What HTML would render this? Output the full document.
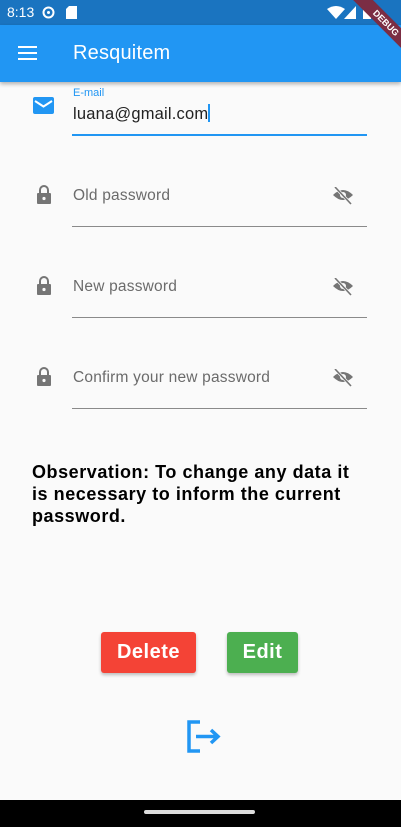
<!DOCTYPE html>
<html><head><meta charset="utf-8"><style>
*{margin:0;padding:0;box-sizing:border-box}
body{width:401px;height:827px;background:#fafafa;font-family:"Liberation Sans",sans-serif;position:relative;overflow:hidden}
.abs{position:absolute}
.sb{top:0;left:0;width:401px;height:25px;background:#1a74c0;color:#fff;font-size:14px}
.ab{top:25px;left:0;width:401px;height:57px;background:#2196f3;box-shadow:0 2px 4px rgba(0,0,0,.3)}
.line{height:1px;background:#8a8a8a;left:72px;width:295px}
.lbl{left:73px;color:#6b6b6b;font-size:15.5px;letter-spacing:.2px}
</style></head><body>
<div class="abs sb"><span class="abs" style="left:7px;top:4px">8:13</span>
<svg class="abs" style="left:41px;top:5px" width="15" height="15" viewBox="0 0 15 15"><circle cx="7.5" cy="7.5" r="5" fill="none" stroke="#fff" stroke-width="2"/><circle cx="7.5" cy="7.5" r="1.5" fill="#fff"/></svg>
<svg class="abs" style="left:66px;top:6px" width="11" height="13"><path d="M3 0H11V13H0V3Z" fill="#fff"/></svg>
<svg class="abs" style="left:327px;top:6px" width="18" height="13"><path d="M0 3Q9-3 18 3L9 13Z" fill="#fff"/></svg>
<svg class="abs" style="left:344px;top:6px" width="12" height="13"><path d="M12 0V13H0Z" fill="#fff"/></svg>
<div class="abs" style="left:363px;top:6px;width:8px;height:13px;background:#fff"></div>
</div>
<div class="abs ab">
<div class="abs" style="left:18px;top:21px;width:19px;height:2px;background:#fff;box-shadow:0 6px 0 #fff,0 12px 0 #fff"></div>
<div class="abs" style="left:73px;top:17px;color:#fff;font-size:20px;letter-spacing:.2px">Resquitem</div>
</div>
<div class="abs" style="left:341px;top:16px;width:90px;height:14px;background:#7b2d44;transform:rotate(45deg);color:#fff;font-size:9px;font-weight:bold;text-align:center;line-height:14px">DEBUG</div>
<svg class="abs" style="left:33px;top:97px" width="21" height="17"><rect width="21" height="17" rx="2" fill="#2196f3"/><path d="M2 4L10.5 9.5L19 4" fill="none" stroke="#fff" stroke-width="2"/></svg>
<div class="abs" style="left:73px;top:87px;color:#2196f3;font-size:11px">E-mail</div>
<div class="abs" style="left:73px;top:104px;color:#222;font-size:16.5px;letter-spacing:.2px">luana@gmail.com<span style="display:inline-block;width:2px;height:18px;background:#2196f3;vertical-align:-3px"></span></div>
<div class="abs" style="left:72px;top:134px;width:295px;height:2px;background:#2196f3"></div>

<div class="abs lbl" style="top:187px">Old password</div>
<div class="abs lbl" style="top:278px">New password</div>
<div class="abs lbl" style="top:369px">Confirm your new password</div>
<div class="abs line" style="top:226px"></div>
<div class="abs line" style="top:317px"></div>
<div class="abs line" style="top:408px"></div>
<svg width="0" height="0"><defs>
<g id="lk"><path d="M4 8V5a4 4 0 018 0V8" fill="none" stroke="#757575" stroke-width="2"/><rect x="1" y="8" width="14" height="11" rx="1" fill="#757575"/><circle cx="8" cy="13.5" r="1.6" fill="#fafafa"/></g>
<g id="ey"><path d="M1 8Q11-2 21 8Q11 18 1 8Z" fill="#757575"/><circle cx="11" cy="8" r="3" fill="#fafafa"/><path d="M3 0L19 17" stroke="#fafafa" stroke-width="3"/><path d="M3 0L19 17" stroke="#757575" stroke-width="1.6"/></g>
</defs></svg>
<svg class="abs" style="left:36px;top:185px" width="16" height="20"><use href="#lk"/></svg>
<svg class="abs" style="left:36px;top:276px" width="16" height="20"><use href="#lk"/></svg>
<svg class="abs" style="left:36px;top:367px" width="16" height="20"><use href="#lk"/></svg>
<svg class="abs" style="left:332px;top:187px" width="22" height="18"><use href="#ey"/></svg>
<svg class="abs" style="left:332px;top:278px" width="22" height="18"><use href="#ey"/></svg>
<svg class="abs" style="left:332px;top:369px" width="22" height="18"><use href="#ey"/></svg>

<div class="abs" style="left:32px;top:461px;width:338px;font-size:18px;font-weight:bold;line-height:22px;color:#000;letter-spacing:.55px">Observation: To change any data it is necessary to inform the current password.</div>

<div class="abs" style="left:101px;top:632px;width:95px;height:41px;background:#f44336;border-radius:3px;box-shadow:0 2px 3px rgba(0,0,0,.25);color:#fff;font-size:20px;font-weight:bold;text-align:center;line-height:41px;letter-spacing:.5px">Delete</div>
<div class="abs" style="left:227px;top:632px;width:71px;height:41px;background:#4caf50;border-radius:3px;box-shadow:0 2px 3px rgba(0,0,0,.25);color:#fff;font-size:20px;font-weight:bold;text-align:center;line-height:41px;letter-spacing:.5px">Edit</div>
<svg class="abs" style="left:186px;top:720px" width="36" height="34"><path d="M14 2H3V31H14" fill="none" stroke="#2196f3" stroke-width="3.5"/><path d="M10 16.5H31M25 10L32 16.5L25 23" fill="none" stroke="#2196f3" stroke-width="3.5"/></svg>

<div class="abs" style="left:0;top:800px;width:401px;height:27px;background:#000"></div>
<div class="abs" style="left:144px;top:810px;width:111px;height:4px;border-radius:2px;background:#ddd"></div>
</body></html>
